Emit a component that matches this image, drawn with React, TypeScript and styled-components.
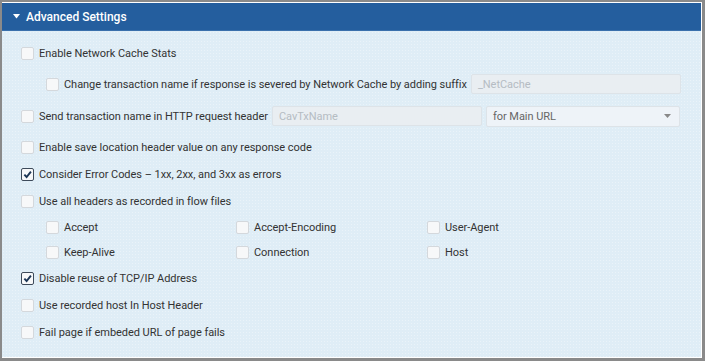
import React from 'react'
import styled, { createGlobalStyle } from 'styled-components'

const Global = createGlobalStyle`
  html, body { margin: 0; padding: 0; background: #fff; }
  body { font-family: Roboto, "Liberation Sans", Arial, sans-serif; }
`

const Frame = styled.div`
  width: 705px;
  height: 361px;
  box-sizing: border-box;
  border: 2px solid #8a8a8a;
  border-right-width: 3px;
  border-bottom-width: 3px;
  background: #fff;
  padding: 0 1px 1px 0;
  display: flex;
  flex-direction: column;
  overflow: hidden;
`

const Header = styled.div`
  height: 27px;
  margin-top: 1px;
  background: #245e9e;
  border-bottom: 1px solid #3a70ac;
  color: #fff;
  font-size: 12px;
  font-weight: 500;
  display: flex;
  align-items: center;
  padding-left: 11px;
  gap: 6px;
`

const Body = styled.div`
  flex: 1;
  background-color: #dfedf6;
  background-image: radial-gradient(rgba(255, 255, 255, 0.35) 0.6px, transparent 0.8px);
  background-size: 3px 3px;
  padding: 9px 0 0 19px;
  display: flex;
  flex-direction: column;
`

const Row = styled.label<{ $indent?: number; $h?: number; $mt?: number }>`
  display: flex;
  align-items: center;
  height: ${p => p.$h ?? 26}px;
  margin-top: ${p => p.$mt ?? 0}px;
  padding-left: ${p => p.$indent ?? 0}px;
  font-size: 11px;
  letter-spacing: -0.004em;
  color: #333;
  white-space: nowrap;
`

const Box = styled.span<{ $on?: boolean }>`
  width: 11px;
  height: 11px;
  border: 1px solid ${p => (p.$on ? '#3d4a5a' : '#d4d8dc')};
  border-radius: 2px;
  background: #f7f8f9;
  margin-right: 5px;
  display: inline-flex;
  align-items: center;
  justify-content: center;
  flex: none;
`

const Field = styled.span<{ $w: number }>`
  width: ${p => p.$w}px;
  height: 20px;
  box-sizing: border-box;
  margin-left: 4px;
  border: 1px solid #dde3e8;
  border-radius: 2px;
  background: #e9eef2;
  color: #b5bcc3;
  font-size: 11px;
  display: flex;
  align-items: center;
  padding-left: 6px;
`

const Select = styled(Field)`
  background: #eef3f8;
  color: #666;
  justify-content: space-between;
  padding-right: 8px;
  height: 21px;
`

const Grid = styled.div`
  display: grid;
  grid-template-columns: 190px 191px 120px;
  padding-left: 25px;
  margin-top: 1px;
`

const Tick = () => (
  <svg width="9" height="9" viewBox="0 0 10 10">
    <path d="M1.5 5.2 L4 7.8 L8.8 1.8" fill="none" stroke="#1b3555" strokeWidth="2.1" />
  </svg>
)

function Check({ label, on, indent, h, mt }: { label: React.ReactNode; on?: boolean; indent?: number; h?: number; mt?: number }) {
  return (
    <Row $indent={indent} $h={h} $mt={mt}>
      <Box $on={on}>{on && <Tick />}</Box>
      {label}
    </Row>
  )
}

const headers = ['Accept', 'Accept-Encoding', 'User-Agent', 'Keep-Alive', 'Connection', 'Host']

export default function App() {
  return (
    <>
      <Global />
      <Frame>
        <Header>
          <svg width="7" height="5" viewBox="0 0 7 5">
            <path d="M0 0 H7 L3.5 4.5 Z" fill="#fff" />
          </svg>
          Advanced Settings
        </Header>
        <Body>
          <Check label="Enable Network Cache Stats" />
          <Row $indent={25} $mt={5}>
            <Box />
            Change transaction name if response is severed by Network Cache by adding suffix
            <Field $w={210}>_NetCache</Field>
          </Row>
          <Row $mt={6}>
            <Box />
            Send transaction name in HTTP request header
            <Field $w={210}>CavTxName</Field>
            <Select $w={194}>
              for Main URL
              <svg width="7" height="4" viewBox="0 0 7 4">
                <path d="M0 0 H7 L3.5 4 Z" fill="#888" />
              </svg>
            </Select>
          </Row>
          <Check label="Enable save location header value on any response code" mt={5} />
          <Check label="Consider Error Codes – 1xx, 2xx, and 3xx as errors" on mt={1} />
          <Check label="Use all headers as recorded in flow files" mt={1} />
          <Grid>
            {headers.map(hd => (
              <Check key={hd} label={hd} h={25} />
            ))}
          </Grid>
          <Check label="Disable reuse of TCP/IP Address" on />
          <Check label="Use recorded host In Host Header" mt={1} />
          <Check label="Fail page if embeded URL of page fails" mt={1} />
        </Body>
      </Frame>
    </>
  )
}
